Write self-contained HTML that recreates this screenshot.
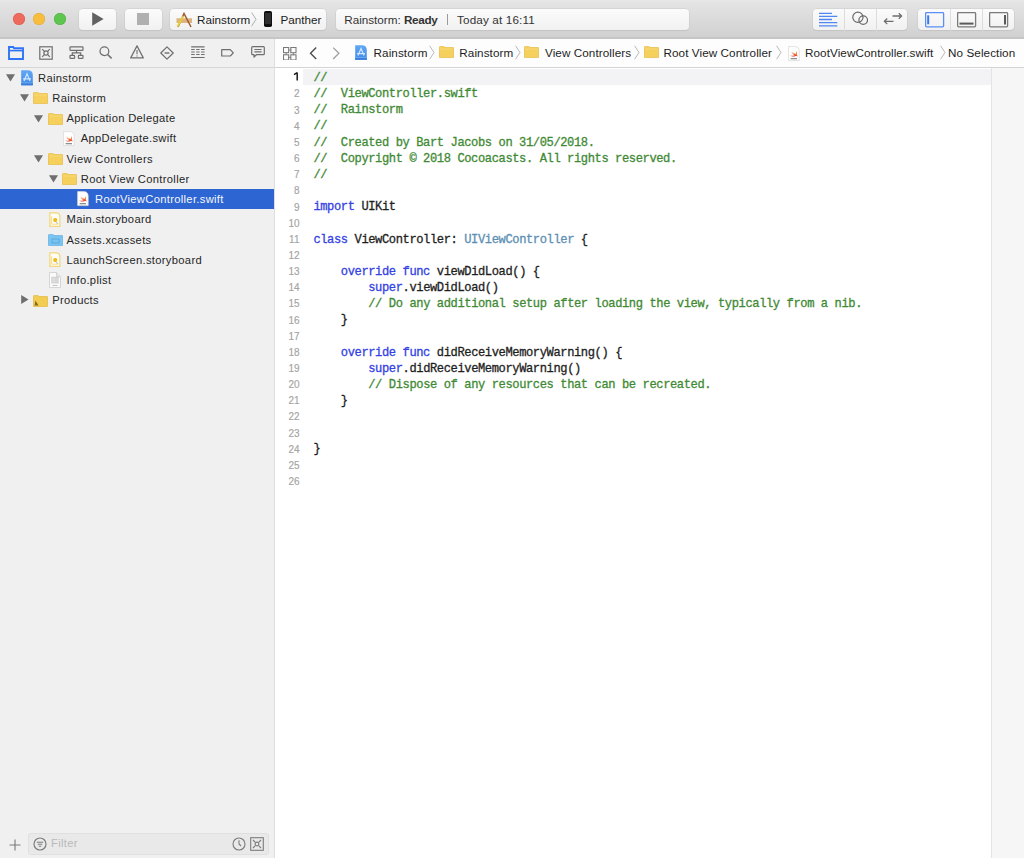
<!DOCTYPE html>
<html><head><meta charset="utf-8">
<style>
*{margin:0;padding:0;box-sizing:border-box}
html,body{width:1024px;height:858px;overflow:hidden;background:#fff;font-family:"Liberation Sans",sans-serif;}
.abs{position:absolute}
#toolbar{position:absolute;left:0;top:0;width:1024px;height:39px;background:linear-gradient(#e8e8e8,#e3e3e3 10%,#d1d1d1);border-bottom:2px solid #c6c6c6}
.light{position:absolute;top:13.3px;width:12px;height:12px;border-radius:50%}
.btn{position:absolute;top:8.7px;height:21px;background:linear-gradient(#fbfbfb,#f1f1f1);border-radius:4px;box-shadow:0 0 0 0.5px #c9c9c9,0 1px 1px rgba(0,0,0,0.1)}
#sidebar{position:absolute;left:0;top:39px;width:275px;height:819px;background:#f0f0f0;border-right:1px solid #dedede}
#tabs{position:absolute;left:0;top:0;width:274px;height:29px;border-bottom:1px solid #d6d6d6}
.row{position:absolute;left:0;width:274px;height:20px;font-size:11.2px;letter-spacing:0.32px;color:#262626;white-space:nowrap}
.row.sel{background:#2d65d2;color:#f4f7fd}
.row .t{position:absolute;top:4.5px}
.tri{position:absolute;width:0;height:0}
#jump{position:absolute;left:275px;top:39px;width:749px;height:29px;background:#fdfdfd;border-bottom:1px solid #d3d3d3;font-size:11.7px;color:#1e1e1e;white-space:nowrap}
#jump .t{position:absolute;top:6.8px;letter-spacing:0.08px}
#code{position:absolute;left:275px;top:68px;width:749px;height:790px;background:#fff}
.ln{position:absolute;left:0;width:24.5px;text-align:right;font-family:"Liberation Sans",sans-serif;font-size:10px;line-height:16px;color:#a4a4a4;-webkit-text-stroke:0.15px #a4a4a4}
.ln.cur{color:#1a1a1a;-webkit-text-stroke:0.3px #1a1a1a}
.cl{position:absolute;left:38.4px;font-family:"Liberation Mono",monospace;font-size:12.1px;letter-spacing:-0.4px;line-height:16px;-webkit-text-stroke:0.3px currentColor;color:#1e1e1e;white-space:pre}
.c{color:#3f8a35}
.k{color:#3442e4}
.ty{color:#5d8fb3}
</style></head><body>

<div id="toolbar">
  <div class="light" style="left:13px;background:#ee6a5d;box-shadow:inset 0 0 0 0.5px #dc5a4e"></div>
  <div class="light" style="left:33px;background:#f6be3c;box-shadow:inset 0 0 0 0.5px #e0a73d"></div>
  <div class="light" style="left:53.8px;background:#5ec54f;box-shadow:inset 0 0 0 0.5px #52ac45"></div>
  <div class="btn" style="left:79px;width:37px">
    <svg class="abs" style="left:12.6px;top:3.6px" width="12" height="14" viewBox="0 0 12 14"><path d="M0.2 0.2 L11.6 7 L0.2 13.8Z" fill="#616161"/></svg>
  </div>
  <div class="btn" style="left:125px;width:37px">
    <div class="abs" style="left:12px;top:4.7px;width:12.3px;height:11.5px;background:#b0b0b0"></div>
  </div>
  <div class="btn" style="left:170px;width:156px">
    <svg class="abs" style="left:5.5px;top:3px" width="17" height="16" viewBox="0 0 17 16">
      <rect x="0.5" y="6.3" width="15.5" height="4.6" fill="#ddb27d"/>
      <path d="M2 15 L8 1.5 L15 15" stroke="#9c5a32" stroke-width="1.5" fill="none"/>
      <path d="M1.5 14.5 L7 4.5" stroke="#e6d23e" stroke-width="2"/>
    </svg>
    <span class="abs" style="left:27px;top:4px;font-size:11.7px;color:#1c1c1c">Rainstorm</span>
    <svg class="abs" style="left:80.8px;top:3.5px" width="6" height="15" viewBox="0 0 6 15"><path d="M0.6 0.5 L5 7.3 L0.6 14.2" stroke="#b0b0b0" fill="none" stroke-width="1"/></svg>
    <div class="abs" style="left:93.8px;top:2.5px;width:8px;height:15.7px;border-radius:1.8px;background:#0e0e0e"><div class="abs" style="left:1px;top:2.3px;width:6px;height:10.5px;background:#2e2e2e"></div></div>
    <span class="abs" style="left:110.5px;top:4px;font-size:11.7px;color:#1c1c1c">Panther</span>
  </div>
  <div class="btn" style="left:336px;width:353px">
    <span class="abs" style="left:8.2px;top:4px;font-size:11.7px;color:#333">Rainstorm: <b style="letter-spacing:-0.3px">Ready</b></span>
    <div class="abs" style="left:110.5px;top:5px;width:1px;height:11px;background:#9a9a9a"></div>
    <span class="abs" style="left:121px;top:4px;font-size:11.7px;color:#333;letter-spacing:0.15px">Today at 16:11</span>
  </div>
  <!-- editor group -->
  <div class="btn" style="left:813px;width:94px">
    <div class="abs" style="left:31px;top:0;width:1px;height:22px;background:#dcdcdc"></div>
    <div class="abs" style="left:63px;top:0;width:1px;height:22px;background:#dcdcdc"></div>
    <svg class="abs" style="left:6px;top:3.5px" width="19" height="15" viewBox="0 0 19 15"><g stroke="#4f88f2" stroke-width="1.3"><path d="M0 1.4H13M0 4.3H18.3M0 7.5H13M0 10.6H18.3M0 13.8H18.3"/></g></svg>
    <svg class="abs" style="left:38px;top:2.5px" width="17" height="16" viewBox="0 0 17 16"><g stroke="#6a6a6a" stroke-width="1.2" fill="none"><circle cx="6.9" cy="6.2" r="5.1"/><circle cx="12.2" cy="9.1" r="4.3"/></g></svg>
    <svg class="abs" style="left:70px;top:3.5px" width="20" height="14" viewBox="0 0 20 14"><g stroke="#6e6e6e" stroke-width="1.3" fill="none"><path d="M9.5 4H18.6M15.8 1.2L18.6 4L15.8 6.8M10.5 9.3H1.4M4.2 6.5L1.4 9.3L4.2 12.1"/></g></svg>
    </div>
  <div class="btn" style="left:918px;width:96px">
    <div class="abs" style="left:32px;top:0;width:1px;height:22px;background:#dcdcdc"></div>
    <div class="abs" style="left:64px;top:0;width:1px;height:22px;background:#dcdcdc"></div>
    <svg class="abs" style="left:7px;top:3px" width="20" height="16" viewBox="0 0 20 16"><g fill="none"><rect x="0.6" y="0.6" width="18" height="14.2" rx="1" stroke="#5a8ff3" stroke-width="1.3"/><path d="M3.2 3.3 V12.3" stroke="#3b78f0" stroke-width="2"/></g></svg>
    <svg class="abs" style="left:39px;top:3px" width="20" height="16" viewBox="0 0 20 16"><g fill="none"><rect x="0.6" y="0.6" width="18" height="14.2" rx="1" stroke="#7a7a7a" stroke-width="1.3"/><path d="M2.5 11.6 H16.5" stroke="#5a5a5a" stroke-width="2"/></g></svg>
    <svg class="abs" style="left:71px;top:3px" width="20" height="16" viewBox="0 0 20 16"><g fill="none"><rect x="0.6" y="0.6" width="18" height="14.2" rx="1" stroke="#7a7a7a" stroke-width="1.3"/><path d="M16 3 V12.5" stroke="#5a5a5a" stroke-width="2"/></g></svg>
  </div>
</div>

<div id="sidebar">
  <div id="tabs">
<svg class="abs" style="left:7.5px;top:6.5px" width="16" height="14" viewBox="0 0 16 14"><g fill="none" stroke="#2f74f5"><path d="M1 1 L5.2 1 L6.2 2.3 L15 2.3 L15 13 L1 13Z" stroke-width="1.9"/><path d="M1.8 4.6 L14.2 4.6" stroke-width="1.6"/></g></svg>
<svg class="abs" style="left:38.8px;top:6.5px" width="14" height="14" viewBox="0 0 14 14"><g fill="none" stroke="#6e6e6e" stroke-width="1.2"><rect x="0.8" y="0.8" width="12.4" height="12.4"/><circle cx="7" cy="7" r="2.1"/><path d="M3.2 3.2 L5.1 5.1 M10.8 3.2 L8.9 5.1 M3.2 10.8 L5.1 8.9 M10.8 10.8 L8.9 8.9"/></g></svg>
<svg class="abs" style="left:68.5px;top:7px" width="15" height="13" viewBox="0 0 15 13"><g fill="none" stroke="#6e6e6e" stroke-width="1.2"><rect x="1" y="0.8" width="13" height="3.6" rx="0.7"/><path d="M7.5 4.4 V6.9 M3.3 9.4 V6.9 H11.7 V9.4"/><rect x="1" y="9.4" width="4.6" height="3" rx="0.7"/><rect x="9.4" y="9.4" width="4.6" height="3" rx="0.7"/></g></svg>
<svg class="abs" style="left:99px;top:6.5px" width="14" height="14" viewBox="0 0 14 14"><g fill="none" stroke="#6e6e6e" stroke-width="1.25"><circle cx="5.4" cy="5.2" r="4.4"/><path d="M8.6 8.5 L12.6 12.4" stroke-width="1.5"/></g></svg>
<svg class="abs" style="left:129.5px;top:6.3px" width="14" height="14" viewBox="0 0 14 14"><g fill="none" stroke="#6e6e6e" stroke-width="1.2"><path d="M7 0.9 L13.3 12.9 L0.7 12.9Z" stroke-linejoin="round"/><path d="M7 5 V9.2 M7 10.4 V11.6" stroke-width="1.1"/></g></svg>
<svg class="abs" style="left:159.8px;top:6.8px" width="14" height="14" viewBox="0 0 14 14"><g fill="none" stroke="#6e6e6e" stroke-width="1.2"><path d="M7 0.8 L13.2 7 L7 13.2 L0.8 7Z" stroke-linejoin="round"/><path d="M4.6 7 H9.4" stroke-width="1.4"/></g></svg>
<svg class="abs" style="left:190.5px;top:7px" width="14" height="13" viewBox="0 0 14 13"><g fill="none" stroke="#6e6e6e"><path d="M0.2 0.9 H13.6 M0.2 11.5 H13.6" stroke-width="1.1"/><path d="M0.2 3.5 H3.7 M5.2 3.5 H8.6 M10.1 3.5 H13.6 M0.2 6 H3.7 M5.2 6 H8.6 M10.1 6 H13.6 M0.2 8.5 H3.7 M5.2 8.5 H8.6 M10.1 8.5 H13.6" stroke-width="1.1"/></g></svg>
<svg class="abs" style="left:220.8px;top:9.6px" width="14" height="8" viewBox="0 0 14 8"><path d="M0.7 0.7 H9.3 L12.3 3.9 L9.3 7 H0.7Z" fill="none" stroke="#6e6e6e" stroke-width="1.2" stroke-linejoin="round"/></svg>
<svg class="abs" style="left:251px;top:7px" width="14" height="12" viewBox="0 0 14 12"><g fill="none" stroke="#6e6e6e" stroke-width="1.2"><path d="M1.6 0.7 H12.4 Q13.3 0.7 13.3 1.6 V7.8 Q13.3 8.7 12.4 8.7 H5.4 L3 11 V8.7 H1.6 Q0.7 8.7 0.7 7.8 V1.6 Q0.7 0.7 1.6 0.7Z" stroke-linejoin="round"/><path d="M3.4 3.5 H10.6 M3.4 5.9 H10.6"/></g></svg>
</div>
  <div id="tree"><div class="row" style="top:28.00px"><svg class="abs" style="left:5.80px;top:7px" width="9" height="8" viewBox="0 0 9 8"><path d="M0 0.3 L9 0.3 L4.5 7.6Z" fill="#6f6f6f"/></svg><div class="abs" style="left:20.50px;top:3px;line-height:0"><svg width="12" height="15.5" viewBox="0 0 12 15.5"><defs><linearGradient id="pg2" x1="0" y1="0" x2="0" y2="1"><stop offset="0" stop-color="#62a8f4"/><stop offset="1" stop-color="#3f88ea"/></linearGradient></defs><path d="M0.2 0.2 H6.8 Q11.8 0.2 11.8 5.2 V15.3 H0.2Z" fill="url(#pg2)"/><path d="M3 10.9 L6 3.8 L9 10.9 M2 8.8 H10" stroke="#d2e8ff" stroke-width="1.2" fill="none"/><rect x="0.2" y="12.8" width="11.6" height="2.5" fill="#3a7ed8"/><rect x="0.2" y="12.6" width="11.6" height="0.6" fill="#8cc0f8"/></svg></div><span class="t" style="left:38.00px">Rainstorm</span></div>
<div class="row" style="top:48.27px"><svg class="abs" style="left:20.05px;top:7px" width="9" height="8" viewBox="0 0 9 8"><path d="M0 0.3 L9 0.3 L4.5 7.6Z" fill="#6f6f6f"/></svg><div class="abs" style="left:33.25px;top:5px;line-height:0"><svg width="15" height="12" viewBox="0 0 15 12"><path d="M0.5 1.2 Q0.5 0.4 1.3 0.4 L4.6 0.4 Q5.3 0.4 5.6 1.1 L5.9 1.6 L14.2 1.6 Q14.6 1.6 14.6 2 L14.6 11.2 Q14.6 11.6 14.2 11.6 L0.9 11.6 Q0.5 11.6 0.5 11.2Z" fill="#f6d05c" stroke="#e6b83c" stroke-width="0.7"/><path d="M0.9 3 L14.2 3" stroke="#f8dc80" stroke-width="0.8"/></svg></div><span class="t" style="left:52.25px">Rainstorm</span></div>
<div class="row" style="top:68.54px"><svg class="abs" style="left:34.30px;top:7px" width="9" height="8" viewBox="0 0 9 8"><path d="M0 0.3 L9 0.3 L4.5 7.6Z" fill="#6f6f6f"/></svg><div class="abs" style="left:47.50px;top:5px;line-height:0"><svg width="15" height="12" viewBox="0 0 15 12"><path d="M0.5 1.2 Q0.5 0.4 1.3 0.4 L4.6 0.4 Q5.3 0.4 5.6 1.1 L5.9 1.6 L14.2 1.6 Q14.6 1.6 14.6 2 L14.6 11.2 Q14.6 11.6 14.2 11.6 L0.9 11.6 Q0.5 11.6 0.5 11.2Z" fill="#f6d05c" stroke="#e6b83c" stroke-width="0.7"/><path d="M0.9 3 L14.2 3" stroke="#f8dc80" stroke-width="0.8"/></svg></div><span class="t" style="left:66.50px">Application Delegate</span></div>
<div class="row" style="top:88.81px"><div class="abs" style="left:62.95px;top:2.8px;line-height:0"><svg width="12" height="16" viewBox="0 0 12 16"><defs><linearGradient id="sg" x1="0" y1="0" x2="0" y2="1"><stop offset="0" stop-color="#fbb04a"/><stop offset="1" stop-color="#e83a28"/></linearGradient></defs><path d="M0.6 0.6 H6.6 Q11.2 0.6 11.2 5.2 V14.6 H0.6Z" fill="#fff" stroke="#d6d6d6" stroke-width="0.7"/><path transform="translate(1.5 3.6) scale(0.088 0.082)" d="M70 12 C85 25 90 45 82 60 C90 70 92 80 88 85 C80 75 70 78 65 80 C45 90 20 85 5 68 C25 78 45 78 58 70 C40 58 22 40 10 22 C25 37 42 50 55 57 C40 45 28 30 20 18 C38 35 58 50 70 55 C78 42 78 25 70 12Z" fill="url(#sg)"/><rect x="2.6" y="12" width="6.4" height="1.3" fill="#8e8e8e"/></svg></div><span class="t" style="left:80.75px">AppDelegate.swift</span></div>
<div class="row" style="top:109.08px"><svg class="abs" style="left:34.30px;top:7px" width="9" height="8" viewBox="0 0 9 8"><path d="M0 0.3 L9 0.3 L4.5 7.6Z" fill="#6f6f6f"/></svg><div class="abs" style="left:47.50px;top:5px;line-height:0"><svg width="15" height="12" viewBox="0 0 15 12"><path d="M0.5 1.2 Q0.5 0.4 1.3 0.4 L4.6 0.4 Q5.3 0.4 5.6 1.1 L5.9 1.6 L14.2 1.6 Q14.6 1.6 14.6 2 L14.6 11.2 Q14.6 11.6 14.2 11.6 L0.9 11.6 Q0.5 11.6 0.5 11.2Z" fill="#f6d05c" stroke="#e6b83c" stroke-width="0.7"/><path d="M0.9 3 L14.2 3" stroke="#f8dc80" stroke-width="0.8"/></svg></div><span class="t" style="left:66.50px">View Controllers</span></div>
<div class="row" style="top:129.35px"><svg class="abs" style="left:48.55px;top:7px" width="9" height="8" viewBox="0 0 9 8"><path d="M0 0.3 L9 0.3 L4.5 7.6Z" fill="#6f6f6f"/></svg><div class="abs" style="left:61.75px;top:5px;line-height:0"><svg width="15" height="12" viewBox="0 0 15 12"><path d="M0.5 1.2 Q0.5 0.4 1.3 0.4 L4.6 0.4 Q5.3 0.4 5.6 1.1 L5.9 1.6 L14.2 1.6 Q14.6 1.6 14.6 2 L14.6 11.2 Q14.6 11.6 14.2 11.6 L0.9 11.6 Q0.5 11.6 0.5 11.2Z" fill="#f6d05c" stroke="#e6b83c" stroke-width="0.7"/><path d="M0.9 3 L14.2 3" stroke="#f8dc80" stroke-width="0.8"/></svg></div><span class="t" style="left:80.75px">Root View Controller</span></div>
<div class="row sel" style="top:149.62px"><div class="abs" style="left:77.20px;top:2.8px;line-height:0"><svg width="12" height="16" viewBox="0 0 12 16"><defs><linearGradient id="sg" x1="0" y1="0" x2="0" y2="1"><stop offset="0" stop-color="#fbb04a"/><stop offset="1" stop-color="#e83a28"/></linearGradient></defs><path d="M0.6 0.6 H6.6 Q11.2 0.6 11.2 5.2 V14.6 H0.6Z" fill="#fff" stroke="#d6d6d6" stroke-width="0.7"/><path transform="translate(1.5 3.6) scale(0.088 0.082)" d="M70 12 C85 25 90 45 82 60 C90 70 92 80 88 85 C80 75 70 78 65 80 C45 90 20 85 5 68 C25 78 45 78 58 70 C40 58 22 40 10 22 C25 37 42 50 55 57 C40 45 28 30 20 18 C38 35 58 50 70 55 C78 42 78 25 70 12Z" fill="url(#sg)"/><rect x="2.6" y="12" width="6.4" height="1.3" fill="#8e8e8e"/></svg></div><span class="t" style="left:95.00px">RootViewController.swift</span></div>
<div class="row" style="top:169.89px"><div class="abs" style="left:48.70px;top:2.8px;line-height:0"><svg width="12" height="16" viewBox="0 0 12 16"><path d="M0.9 0.9 H7 Q10.9 0.9 10.9 4.8 V14.3 H0.9Z" fill="#fffef8" stroke="#f3d677" stroke-width="1.25"/><path d="M2.6 4.2 V12.2 H9.4" fill="none" stroke="#f6dd86" stroke-width="1"/><circle cx="6.2" cy="8.1" r="2.1" fill="#f1b81c"/><path d="M7.3 10 L8.6 12" stroke="#9a9a9a" stroke-width="0.7"/></svg></div><span class="t" style="left:66.50px">Main.storyboard</span></div>
<div class="row" style="top:190.16px"><div class="abs" style="left:47.50px;top:5px;line-height:0"><svg width="15" height="12" viewBox="0 0 15 12"><path d="M0.5 1.2 Q0.5 0.4 1.3 0.4 L4.6 0.4 Q5.3 0.4 5.6 1.1 L5.9 1.6 L14.2 1.6 Q14.6 1.6 14.6 2 L14.6 11.2 Q14.6 11.6 14.2 11.6 L0.9 11.6 Q0.5 11.6 0.5 11.2Z" fill="#78c4f2" stroke="#5eaee0" stroke-width="0.7"/><rect x="4" y="5" width="7" height="4" fill="none" stroke="#5aa3d6" stroke-width="0.8"/></svg></div><span class="t" style="left:66.50px">Assets.xcassets</span></div>
<div class="row" style="top:210.43px"><div class="abs" style="left:48.70px;top:2.8px;line-height:0"><svg width="12" height="16" viewBox="0 0 12 16"><path d="M0.9 0.9 H7 Q10.9 0.9 10.9 4.8 V14.3 H0.9Z" fill="#fffef8" stroke="#f3d677" stroke-width="1.25"/><path d="M2.6 4.2 V12.2 H9.4" fill="none" stroke="#f6dd86" stroke-width="1"/><circle cx="6.2" cy="8.1" r="2.1" fill="#f1b81c"/><path d="M7.3 10 L8.6 12" stroke="#9a9a9a" stroke-width="0.7"/></svg></div><span class="t" style="left:66.50px">LaunchScreen.storyboard</span></div>
<div class="row" style="top:230.70px"><div class="abs" style="left:48.70px;top:2.8px;line-height:0"><svg width="12" height="16" viewBox="0 0 12 16"><path d="M0.5 0.5 L7.5 0.5 L11.5 4.5 L11.5 15.5 L0.5 15.5Z" fill="#fafafa" stroke="#cdcdcd" stroke-width="0.8"/><path d="M7.5 0.5 L7.5 4.5 L11.5 4.5" fill="#e6e6e6" stroke="#cdcdcd" stroke-width="0.8"/><rect x="2.3" y="4.8" width="7.4" height="6.6" fill="#cfcfcf"/><path d="M2.3 7 H9.7 M2.3 9.2 H9.7 M5 4.8 V11.4" stroke="#ededed" stroke-width="0.6"/><rect x="3.5" y="13" width="5" height="1" fill="#c4c4c4"/></svg></div><span class="t" style="left:66.50px">Info.plist</span></div>
<div class="row" style="top:250.97px"><svg class="abs" style="left:20.75px;top:5.5px" width="8" height="9" viewBox="0 0 8 9"><path d="M0.2 0 L7.5 4.5 L0.2 9Z" fill="#6f6f6f"/></svg><div class="abs" style="left:33.25px;top:5px;line-height:0"><svg width="15" height="12" viewBox="0 0 15 12"><path d="M0.5 1.2 Q0.5 0.4 1.3 0.4 L4.6 0.4 Q5.3 0.4 5.6 1.1 L5.9 1.6 L14.2 1.6 Q14.6 1.6 14.6 2 L14.6 11.2 Q14.6 11.6 14.2 11.6 L0.9 11.6 Q0.5 11.6 0.5 11.2Z" fill="#f3cd52" stroke="#e2b43a" stroke-width="0.7"/><path d="M1.5 10.5 L2.5 5.5 L5.5 10.5Z" fill="#8a6a1a"/></svg></div><span class="t" style="left:52.25px">Products</span></div></div>
<div class="abs" style="left:0;top:783px;width:274px;height:36px">
<svg class="abs" style="left:9px;top:16.6px" width="12" height="12" viewBox="0 0 12 12"><path d="M6 0.5 V11.5 M0.5 6 H11.5" stroke="#7a7a7a" stroke-width="1.1"/></svg>
</div>
<div class="abs" style="left:28px;top:794px;width:241px;height:21.5px;border-radius:4px;background:#e9e9e9;box-shadow:inset 0 0 0 0.5px #d8d8d8">
<svg class="abs" style="left:5px;top:3.8px" width="14" height="14" viewBox="0 0 14 14"><g fill="none" stroke="#7c7c7c"><circle cx="7" cy="7" r="6" stroke-width="1.2"/><path d="M3.8 5.2 H10.2 M4.8 7.2 H9.2 M5.8 9.2 H8.2" stroke-width="1.1"/></g></svg>
<span class="abs" style="left:23px;top:4.3px;font-size:11.2px;letter-spacing:0.32px;color:#b9b9b9">Filter</span>
<svg class="abs" style="left:204px;top:3.8px" width="14" height="14" viewBox="0 0 14 14"><g fill="none" stroke="#7c7c7c" stroke-width="1.1"><circle cx="7" cy="7" r="6"/><path d="M7 3.2 V7 L9 9"/></g></svg>
<svg class="abs" style="left:221.5px;top:3.8px" width="14" height="14" viewBox="0 0 14 14"><g fill="none" stroke="#7c7c7c" stroke-width="1.1"><rect x="0.7" y="0.7" width="12.6" height="12.6"/><circle cx="7" cy="7" r="1.9"/><path d="M3 3 L5.1 5.1 M11 3 L8.9 5.1 M3 11 L5.1 8.9 M11 11 L8.9 8.9"/></g></svg>
</div>
</div>

<div id="jump">
<svg class="abs" style="left:8px;top:7.5px" width="13.5" height="13.5" viewBox="0 0 13.5 13.5"><g fill="none" stroke="#777" stroke-width="1.05"><rect x="0.5" y="0.5" width="5.2" height="5.2"/><rect x="7.8" y="0.5" width="5.2" height="5.2"/><rect x="0.5" y="7.8" width="5.2" height="5.2"/><rect x="7.8" y="7.8" width="5.2" height="5.2"/><path d="M5.7 3.1 H8.5 M10.4 5.7 V8.3 M7.8 10.4 H5 M3.1 7.8 V5.2" stroke-width="0.8"/></g></svg>
<svg class="abs" style="left:34px;top:7.7px" width="9" height="13" viewBox="0 0 9 13"><path d="M7.2 0.6 L1.5 6.3 L7.2 12" fill="none" stroke="#4a4a4a" stroke-width="1.35"/></svg>
<svg class="abs" style="left:56.6px;top:7.7px" width="9" height="13" viewBox="0 0 9 13"><path d="M1.2 0.6 L6.9 6.3 L1.2 12" fill="none" stroke="#a0a0a0" stroke-width="1.3"/></svg>
<div class="abs" style="left:79.5px;top:6px;line-height:0"><svg width="12" height="15" viewBox="0 0 12 15"><defs><linearGradient id="pg" x1="0" y1="0" x2="0" y2="1"><stop offset="0" stop-color="#62a8f4"/><stop offset="1" stop-color="#3f88ea"/></linearGradient></defs><path d="M0.2 0.2 H6.8 Q11.8 0.2 11.8 5.2 V14.8 H0.2Z" fill="url(#pg)"/><path d="M3 10.6 L6 3.6 L9 10.6 M2 8.6 H10" stroke="#d2e8ff" stroke-width="1.2" fill="none"/><rect x="0.2" y="12.4" width="11.6" height="2.4" fill="#3a7ed8"/><rect x="0.2" y="12.2" width="11.6" height="0.6" fill="#8cc0f8"/></svg></div>
<span class="t" style="left:98.6px">Rainstorm</span>
<svg class="abs" style="left:154.0px;top:5.8px" width="6" height="15" viewBox="0 0 6 15"><path d="M0.6 0.8 L5 7.5 L0.6 14.2" fill="none" stroke="#b0b0b0" stroke-width="0.9"/></svg>
<div class="abs" style="left:163.5px;top:7.3px;line-height:0"><svg width="15" height="12" viewBox="0 0 15 12"><path d="M0.5 1.2 Q0.5 0.4 1.3 0.4 L4.6 0.4 Q5.3 0.4 5.6 1.1 L5.9 1.6 L14.2 1.6 Q14.6 1.6 14.6 2 L14.6 11.2 Q14.6 11.6 14.2 11.6 L0.9 11.6 Q0.5 11.6 0.5 11.2Z" fill="#f6d05c" stroke="#e6b83c" stroke-width="0.7"/><path d="M0.9 3 L14.2 3" stroke="#f8dc80" stroke-width="0.8"/></svg></div>
<span class="t" style="left:184.3px">Rainstorm</span>
<svg class="abs" style="left:239.5px;top:5.8px" width="6" height="15" viewBox="0 0 6 15"><path d="M0.6 0.8 L5 7.5 L0.6 14.2" fill="none" stroke="#b0b0b0" stroke-width="0.9"/></svg>
<div class="abs" style="left:249.0px;top:7.3px;line-height:0"><svg width="15" height="12" viewBox="0 0 15 12"><path d="M0.5 1.2 Q0.5 0.4 1.3 0.4 L4.6 0.4 Q5.3 0.4 5.6 1.1 L5.9 1.6 L14.2 1.6 Q14.6 1.6 14.6 2 L14.6 11.2 Q14.6 11.6 14.2 11.6 L0.9 11.6 Q0.5 11.6 0.5 11.2Z" fill="#f6d05c" stroke="#e6b83c" stroke-width="0.7"/><path d="M0.9 3 L14.2 3" stroke="#f8dc80" stroke-width="0.8"/></svg></div>
<span class="t" style="left:270.0px">View Controllers</span>
<svg class="abs" style="left:359.0px;top:5.8px" width="6" height="15" viewBox="0 0 6 15"><path d="M0.6 0.8 L5 7.5 L0.6 14.2" fill="none" stroke="#b0b0b0" stroke-width="0.9"/></svg>
<div class="abs" style="left:369.0px;top:7.3px;line-height:0"><svg width="15" height="12" viewBox="0 0 15 12"><path d="M0.5 1.2 Q0.5 0.4 1.3 0.4 L4.6 0.4 Q5.3 0.4 5.6 1.1 L5.9 1.6 L14.2 1.6 Q14.6 1.6 14.6 2 L14.6 11.2 Q14.6 11.6 14.2 11.6 L0.9 11.6 Q0.5 11.6 0.5 11.2Z" fill="#f6d05c" stroke="#e6b83c" stroke-width="0.7"/><path d="M0.9 3 L14.2 3" stroke="#f8dc80" stroke-width="0.8"/></svg></div>
<span class="t" style="left:388.5px">Root View Controller</span>
<svg class="abs" style="left:501.0px;top:5.8px" width="6" height="15" viewBox="0 0 6 15"><path d="M0.6 0.8 L5 7.5 L0.6 14.2" fill="none" stroke="#b0b0b0" stroke-width="0.9"/></svg>
<div class="abs" style="left:512.5px;top:6.5px;line-height:0"><svg width="12" height="16" viewBox="0 0 12 16"><defs><linearGradient id="sg3" x1="0" y1="0" x2="0" y2="1"><stop offset="0" stop-color="#fbb04a"/><stop offset="1" stop-color="#e83a28"/></linearGradient></defs><path d="M0.6 0.6 H6.6 Q11.2 0.6 11.2 5.2 V14.6 H0.6Z" fill="#fff" stroke="#d6d6d6" stroke-width="0.7"/><path transform="translate(1.5 3.6) scale(0.088 0.082)" d="M70 12 C85 25 90 45 82 60 C90 70 92 80 88 85 C80 75 70 78 65 80 C45 90 20 85 5 68 C25 78 45 78 58 70 C40 58 22 40 10 22 C25 37 42 50 55 57 C40 45 28 30 20 18 C38 35 58 50 70 55 C78 42 78 25 70 12Z" fill="url(#sg3)"/><rect x="2.6" y="12" width="6.4" height="1.3" fill="#8e8e8e"/></svg></div>
<span class="t" style="left:530.0px">RootViewController.swift</span>
<svg class="abs" style="left:664.5px;top:5.8px" width="6" height="15" viewBox="0 0 6 15"><path d="M0.6 0.8 L5 7.5 L0.6 14.2" fill="none" stroke="#b0b0b0" stroke-width="0.9"/></svg>
<span class="t" style="left:673.0px">No Selection</span>
</div>

<div id="code">
<div class="abs" style="left:28px;top:1px;width:688px;height:16px;background:#f3f3f5"></div>
<div class="abs" style="left:716px;top:0;width:1px;height:791px;background:#e4e4e4"></div>
<div class="abs" style="left:717px;top:0;width:32px;height:791px;background:#f6f6f6"></div>
<svg class="abs" style="left:18px;top:4px" width="6" height="9" viewBox="0 0 6 9"><path d="M4.2 0.4 V8.6 M4.2 0.7 L1 2.6" fill="none" stroke="#1a1a1a" stroke-width="1.5"/></svg>
<div class="cl c" style="top:2.00px">//</div>
<div class="ln" style="top:18.45px">2</div>
<div class="cl c" style="top:18.15px">//  ViewController.swift</div>
<div class="ln" style="top:34.60px">3</div>
<div class="cl c" style="top:34.30px">//  Rainstorm</div>
<div class="ln" style="top:50.75px">4</div>
<div class="cl c" style="top:50.45px">//</div>
<div class="ln" style="top:66.90px">5</div>
<div class="cl c" style="top:66.60px">//  Created by Bart Jacobs on 31/05/2018.</div>
<div class="ln" style="top:83.05px">6</div>
<div class="cl c" style="top:82.75px">//  Copyright © 2018 Cocoacasts. All rights reserved.</div>
<div class="ln" style="top:99.20px">7</div>
<div class="cl c" style="top:98.90px">//</div>
<div class="ln" style="top:115.35px">8</div>
<div class="ln" style="top:131.50px">9</div>
<div class="cl" style="top:131.20px"><span class="k">import</span> UIKit</div>
<div class="ln" style="top:147.65px">10</div>
<div class="ln" style="top:163.80px">11</div>
<div class="cl" style="top:163.50px"><span class="k">class</span> ViewController: <span class="ty">UIViewController</span> {</div>
<div class="ln" style="top:179.95px">12</div>
<div class="ln" style="top:196.10px">13</div>
<div class="cl" style="top:195.80px">    <span class="k">override func</span> viewDidLoad() {</div>
<div class="ln" style="top:212.25px">14</div>
<div class="cl" style="top:211.95px">        <span class="k">super</span>.viewDidLoad()</div>
<div class="ln" style="top:228.40px">15</div>
<div class="cl" style="top:228.10px">        <span class="c">// Do any additional setup after loading the view, typically from a nib.</span></div>
<div class="ln" style="top:244.55px">16</div>
<div class="cl" style="top:244.25px">    }</div>
<div class="ln" style="top:260.70px">17</div>
<div class="ln" style="top:276.85px">18</div>
<div class="cl" style="top:276.55px">    <span class="k">override func</span> didReceiveMemoryWarning() {</div>
<div class="ln" style="top:293.00px">19</div>
<div class="cl" style="top:292.70px">        <span class="k">super</span>.didReceiveMemoryWarning()</div>
<div class="ln" style="top:309.15px">20</div>
<div class="cl" style="top:308.85px">        <span class="c">// Dispose of any resources that can be recreated.</span></div>
<div class="ln" style="top:325.30px">21</div>
<div class="cl" style="top:325.00px">    }</div>
<div class="ln" style="top:341.45px">22</div>
<div class="ln" style="top:357.60px">23</div>
<div class="ln" style="top:373.75px">24</div>
<div class="cl" style="top:373.45px">}</div>
<div class="ln" style="top:389.90px">25</div>
<div class="ln" style="top:406.05px">26</div>
</div>

</body></html>
